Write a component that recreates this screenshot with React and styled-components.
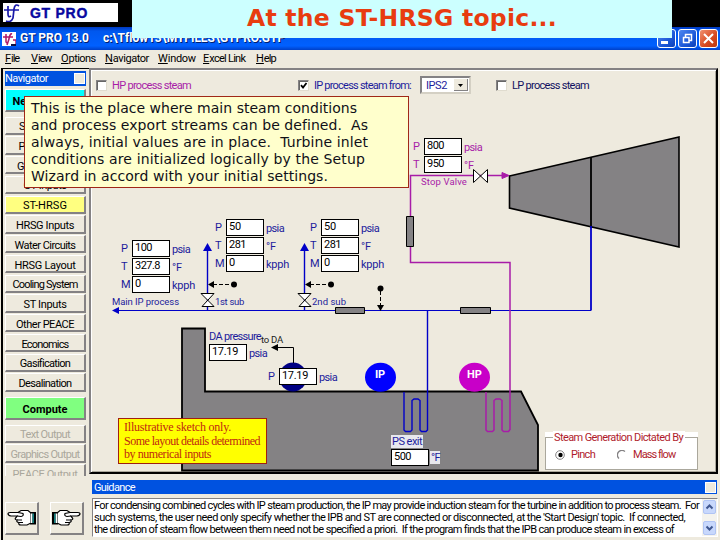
import React, { useLayoutEffect, useRef, useState } from "react";
import styled, { createGlobalStyle, css } from "styled-components";

const C = {
  face: "#eeeade",
  grey: "#848284",
  blue: "#0000c8",
  navy: "#1c1c9c",
  magenta: "#a81ca8",
  red: "#b01c2c",
  bar: "#0052e0",
};

const GlobalStyle = createGlobalStyle`
  * { box-sizing: border-box; }
  body { margin: 0; overflow: hidden; background: ${C.face}; font: 11px/13px Roboto, "Liberation Sans", Arial, sans-serif; color: #000; }
`;

/* A single line of text whose letters are spread over a fixed width. */
const FitLine = styled.span`
  display: inline-block;
  white-space: pre;
  flex: none;
`;
function Fit({ w, children }) {
  const ref = useRef(null);
  const [spacing, setSpacing] = useState(0);
  useLayoutEffect(() => {
    const natural = ref.current.getBoundingClientRect().width;
    setSpacing((w - natural) / String(children).length);
  }, [w, children]);
  return (
    <FitLine ref={ref} style={{ letterSpacing: `${spacing}px` }}>
      {children}
    </FitLine>
  );
}

const Screen = styled.div`
  position: relative;
  width: 720px;
  height: 540px;
  overflow: hidden;
  display: flex;
  flex-direction: column;
  background: ${C.face};
`;

const TopStrip = styled.div`
  height: 27px;
  flex: none;
  padding: 3px 0 0 3px;
  background: #000;
`;
const Brand = styled.div`
  display: flex;
  align-items: center;
  gap: 9px;
  width: 115px;
  height: 19px;
  background: #fff;
  color: #0808a0;
  font: bold 14px/18px "Liberation Sans", Arial, sans-serif;
  -webkit-text-stroke: 0.4px #0808a0;
`;
const Banner = styled.div`
  position: absolute;
  left: 132px;
  top: 0;
  width: 540px;
  height: 38px;
  padding: 5px 0 0 115px;
  background: #ccffff;
  color: #e83c10;
  font: bold 23.5px/27px "DejaVu Sans", Verdana, sans-serif;
`;
const TitleBar = styled.div`
  display: flex;
  align-items: center;
  flex: none;
  height: 23px;
  padding: 0 2px;
  background: linear-gradient(#0038c0, #0058ee 18%, #0060ff 82%, #0040c8);
  color: #fff;
  font-weight: bold;
  font-size: 12px;
  text-shadow: 1px 1px #002070;
`;
const TitleText = styled.div`
  display: flex;
  gap: 14px;
  flex: 1;
  margin-left: 4px;
`;
const WinButtons = styled.div`
  display: flex;
  gap: 2px;
`;
const WinButton = styled.div`
  width: 19px;
  height: 19px;
  border: 1px solid #fff;
  border-radius: 3px;
  background: ${(p) => (p.$close ? "linear-gradient(135deg,#f09070,#d84820 60%,#b83810)" : "linear-gradient(135deg,#5088f0,#1c58d8 60%,#0c40b8)")};
  svg { display: block; }
`;

const MenuBar = styled.div`
  display: flex;
  flex: none;
  height: 18px;
  padding: 2px 0 0 5px;
`;
const MenuItem = styled.div`
  width: ${(p) => p.$w}px;
  white-space: nowrap;
`;

const Body = styled.div`
  display: flex;
  flex: 1;
  min-height: 0;
`;
const Side = styled.div`
  width: 88px;
  flex: none;
  border-top: 1px solid #000;
  border-left: 2px solid #000;
  margin-left: 1px;
  padding: 2px 0 0 2px;
`;
const SideTitle = styled.div`
  display: flex;
  align-items: center;
  justify-content: space-between;
  width: 81px;
  height: 15px;
  padding: 0 1px 0 0;
  background: ${C.bar};
  color: #fff;
`;
const Grip = styled.div`
  width: 11px;
  height: 11px;
  background: ${C.face};
  border: 1px solid #fff;
`;
const NavList = styled.div`
  display: flex;
  flex-direction: column;
  gap: 1.5px;
  width: 81px;
  height: 390px;
  overflow: hidden;
`;
const NavButton = styled.div`
  display: flex;
  align-items: center;
  justify-content: center;
  flex: none;
  height: 18.28px;
  padding-top: 3px;
  margin-top: ${(p) => p.$gap || 0}px;
  border: 1px solid;
  border-color: #fff ${C.grey} ${C.grey} #fff;
  border-bottom-width: 2px;
  border-right-width: 2px;
  background: ${(p) => p.$fill || C.face};
  color: ${(p) => (p.$off ? "#aaa79c" : "#000")};
  ${(p) => p.$big && css`height: 23px; font-weight: bold;`}
`;
const Hands = styled.div`
  display: flex;
  gap: 11px;
  margin-top: 26px;
`;
const HandButton = styled.div`
  width: 34px;
  height: 33px;
  border: 1px solid;
  border-color: #fff ${C.grey} ${C.grey} #fff;
  border-right-width: 2px;
  border-bottom-width: 2px;
  svg { display: block; transform: ${(p) => (p.$flip ? "scaleX(-1)" : "none")}; }
`;

const Main = styled.div`
  flex: 1;
  min-width: 0;
  display: flex;
  flex-direction: column;
`;
const Panel = styled.div`
  position: relative;
  flex: none;
  width: 629px;
  height: 406px;
  border: 2px solid;
  border-color: ${C.grey} #000 #000 ${C.grey};
  box-shadow: inset 1px 1px #fff, inset -1px -1px #aaa79c;
`;
const SteamRow = styled.div`
  position: relative;
  display: grid;
  grid-template-columns: 202px 122px 76px auto;
  align-items: center;
  height: 18px;
  margin: 6px 0 0 5px;
`;
const Option = styled.label`
  display: flex;
  align-items: center;
  gap: 5px;
  color: ${(p) => p.$ink};
`;
const Box = styled.span`
  width: 11px;
  height: 11px;
  background: #fff;
  border: 1px solid;
  border-color: ${C.grey} #e0dccf #e0dccf ${C.grey};
  box-shadow: inset 1px 1px #666;
  svg { display: block; }
`;
const Select = styled.div`
  display: flex;
  justify-content: space-between;
  width: 51px;
  height: 18px;
  padding: 1px 1px 1px 4px;
  border: 2px solid;
  border-color: ${C.grey} #d4d0c4 #d4d0c4 ${C.grey};
  background: #fff;
  color: ${C.navy};
`;
const SelectArrow = styled.span`
  width: 14px;
  background: ${C.face};
  border-right: 1px solid ${C.grey};
  border-bottom: 1px solid ${C.grey};
  svg { display: block; }
`;
const Diagram = styled.svg`
  position: absolute;
  left: -2px;
  top: -2px;
`;
/* Diagram nodes are given in window coordinates; the panel starts at (91, 70). */
const Node = styled.div`
  position: absolute;
  left: ${(p) => p.$x - 91}px;
  top: ${(p) => p.$y - 70}px;
  color: ${(p) => p.$ink || C.navy};
  ${(p) => p.$small && css`font-size: 9.5px;`}
  ${(p) => p.$bold && css`font-weight: bold;`}
`;
const ParamRow = styled.div`
  display: grid;
  grid-template-columns: 11px 38px auto;
  height: 18px;
  align-items: center;
`;
const Field = styled.div`
  width: 38px;
  height: 17px;
  padding: 0 0 0 2px;
  border: 1px solid #000;
  background: #fff;
  color: #000;
  line-height: 14px;
`;
const Unit = styled.span`
  padding: 2px 0 0 2px;
`;
const Name = styled.span`
  padding-top: 1px;
`;
const Sketch = styled(Node)`
  width: 149px;
  height: 46px;
  padding: 2px 0 0 5px;
  border: 1px solid #a02010;
  background: #ffff00;
  color: #c02810;
  font: 12px/13.5px "Liberation Serif", "Times New Roman", serif;
  display: flex;
  flex-direction: column;
  align-items: flex-start;
`;
const ExitTag = styled.div`
  width: ${(p) => p.$w}px;
  height: 13px;
  padding-left: 1px;
  background: #e8e8ee;
`;
const ExitRow = styled.div`
  display: flex;
  align-items: center;
  gap: 1px;
  margin-top: 1px;
`;
const GroupBox = styled(Node)`
  width: 153px;
  height: 38px;
  padding-top: 5px;
  background: #fff;
`;
const GroupFrame = styled.div`
  height: 33px;
  border: 1px solid #aaa79c;
`;
const Legend = styled.div`
  width: 132px;
  height: 13px;
  margin: -7px 0 0 7px;
  padding-left: 1px;
  background: #fff;
`;
const Radios = styled.div`
  display: flex;
  gap: 22px;
  padding: 4px 0 0 9px;
`;
const Radio = styled.div`
  display: flex;
  align-items: center;
  gap: 6px;
`;

const GuideTitle = styled.div`
  display: flex;
  align-items: center;
  justify-content: space-between;
  flex: none;
  width: 625px;
  height: 14px;
  margin: 6px 0 0 3px;
  padding: 0 1px 0 2px;
  background: ${C.bar};
  color: #fff;
`;
const GuideBox = styled.div`
  display: flex;
  justify-content: space-between;
  width: 626px;
  height: 39px;
  margin: 4px 0 0 3px;
  border: 1px solid;
  border-color: ${C.grey} #fff #fff ${C.grey};
  background: #fff;
`;
const GuideText = styled.div`
  display: flex;
  flex-direction: column;
  align-items: flex-start;
  padding: 1px 0 0 1px;
  line-height: 12px;
`;
const ScrollBar = styled.div`
  display: flex;
  flex-direction: column;
  justify-content: space-between;
  width: 15px;
  padding: 1px;
  background: #f4f3ee;
`;
const ScrollButton = styled.div`
  width: 13px;
  height: 14px;
  border: 1px solid #b0c4f4;
  border-radius: 2px;
  background: #c8d8fc;
  svg { display: block; transform: ${(p) => (p.$down ? "scaleY(-1)" : "none")}; }
`;

const Note = styled.div`
  position: absolute;
  left: 24px;
  top: 96px;
  width: 385px;
  height: 92px;
  padding: 3px 0 0 6px;
  border: 1px solid #a02818;
  background: #ffffcc;
  display: flex;
  flex-direction: column;
  align-items: flex-start;
  color: #101018;
  font: 14px/17px "DejaVu Sans", Verdana, sans-serif;
`;

const topNav = [
  ["Start Design", 52], ["Plant Criteria", 53], ["GT Selection", 56], ["GT Inputs", 43],
  ["ST-HRSG", 44, "#ffff80"], ["HRSG Inputs", 58], ["Water Circuits", 61], ["HRSG Layout", 61],
  ["Cooling System", 65], ["ST Inputs", 43], ["Other PEACE", 58], ["Economics", 47],
  ["Gasification", 50], ["Desalination", 53],
];

const menus = [["File", 15, 26], ["View", 20, 30], ["Options", 34, 44], ["Navigator", 43, 53], ["Window", 35, 45], ["Excel Link", 43, 53], ["Help", 19, 30]];

const Check = ({ ink, text, w, on }) => (
  <Option $ink={ink}>
    <Box>{on && <svg width="9" height="9"><path d="M2 4.2 4 6.5 7.5 2" fill="none" stroke="#000" strokeWidth="1.8" /></svg>}</Box>
    <Fit w={w}>{text}</Fit>
  </Option>
);

const unitWidth = { psia: 18, "°F": 10, kpph: 23 };
const Params = ({ x, y, ink, rows }) => (
  <Node $x={x} $y={y} $ink={ink}>
    {rows.map(([name, value, unit, w]) => (
      <ParamRow key={name}>
        <Name>{name}</Name>
        <Field><Fit w={w}>{value}</Fit></Field>
        <Unit><Fit w={unitWidth[unit]}>{unit}</Fit></Unit>
      </ParamRow>
    ))}
  </Node>
);
const Label = ({ x, y, w, ink, small, bold, children }) => (
  <Node $x={x} $y={y} $ink={ink} $small={small} $bold={bold}><Fit w={w}>{children}</Fit></Node>
);

const Hand = () => (
  <svg width="31" height="30" viewBox="0 0 31 30">
    <path d="M2 10.5Q2 9.5 4 9.5H12L15 7.5H22L25 10V20L21 22H15Q12 22 13 19.5Q10 19 11 17Q8 16.5 10 14.5L11 13H5Q2 12.5 2 10.5Z" fill="#fff" stroke="#000" strokeWidth="1.2" />
    <path d="M12 9.5 17 10.5Q18 13 15 13.5L11 13M11 17H16M13 19.5H17" fill="none" stroke="#000" strokeWidth="1.2" />
    <path d="M24 9H30V21.5H24Z" fill="#000" />
    <path d="M24.5 10.5H26.5V20H24.5Z" fill="#fff" />
    <path d="M26.5 10.5H28V20H26.5Z" fill="#108080" />
  </svg>
);

const SubLine = ({ x }) => (
  <g transform={`translate(${x} 0)`}>
    <path d="M.5 310V249" stroke={C.blue} strokeWidth="1.4" />
    <path d="M.5 243 5 251H-4Z" fill={C.blue} />
    <path d="M-6 293.5H7L-5 306.5H7L-6 293.5Z" fill="#fff" stroke="#000" />
    <path d="M6 284.5H25" stroke="#000" strokeDasharray="4 2" />
    <path d="M1 284.5 7 281V288Z" />
    <circle cx="27" cy="284.5" r="3" />
  </g>
);

const Scene = () => (
  <Diagram width="629" height="406" viewBox="89 68 629 406">
    <path d="M182 328.5H205V391.5H521L538 425V470.5H182Z" fill={C.grey} stroke="#000" strokeWidth="1.8" />
    <path d="M509.5 176 679 137V247L509.5 208Z" fill={C.grey} stroke="#000" strokeWidth="1.6" />
    <path d="M591 157V228" stroke="#000" strokeWidth="1.8" />
    <path d="M591 226V310.5" stroke={C.blue} strokeWidth="1.8" />
    <path d="M117 310.5H591" stroke={C.blue} strokeWidth="1.2" />
    <path d="M112 310.5 119 307V314Z" fill={C.blue} />
    <SubLine x={207} />
    <SubLine x={304} />
    <g fill={C.grey} stroke="#000">
      <path d="M335.5 307.5H364.5V313.5H335.5Z M460.5 307.5H490.5V313.5H460.5Z" />
    </g>
    <path d="M380.5 291V305" stroke="#000" strokeDasharray="4 2" />
    <circle cx="380.5" cy="288.5" r="3" />
    <path d="M377 305H384L380.5 311Z" />
    <path d="M427.5 310V430L426 431.5H421.5L420 430V400.5L418 399H414L412 400.5V430L410.5 431.5H405.5L404 430V392" fill="none" stroke={C.blue} strokeWidth="1.4" />
    <path d="M502 175.5H410.5V262.5H510V429.5L508.5 431.5H503.5L502 430V400.5L500 399H496L494 400.5V430L492.5 431.5H487.5L486 430V392" fill="none" stroke={C.magenta} strokeWidth="1.5" />
    <path d="M502 172.5 509 175.5 502 178.5Z" fill={C.magenta} stroke={C.magenta} />
    <path d="M473.5 169.5V182.5L487.5 169.5V182.5Z" fill="#fff" stroke="#000" />
    <path d="M406.5 216.5H413.5V246.5H406.5Z" fill={C.grey} stroke="#000" />
    <ellipse cx="293" cy="377" rx="14" ry="14.5" fill="#000084" />
    <ellipse cx="380.5" cy="377.2" rx="15.5" ry="14.5" fill="#0000ff" />
    <ellipse cx="474.5" cy="377.2" rx="15.5" ry="14.5" fill="#c800c8" />
    <path d="M293.5 363V347.5H277" fill="none" stroke="#000" />
    <path d="M271 347.5 278 344V351Z" />
  </Diagram>
);

const Chevron = () => <svg width="11" height="12"><path d="M2.5 7.5 5.5 4.5 8.5 7.5" fill="none" stroke="#405890" strokeWidth="2" /></svg>;

export default function App() {
  return (
    <Screen>
      <GlobalStyle />
      <TopStrip>
        <Brand>
          <svg width="18" height="19" viewBox="0 0 18 19" fill="none" stroke="#1818a8" strokeWidth="1.7">
            <path d="M5 3V11Q5 15 8 13M1 7H16" />
            <path d="M16 3Q12 0 11 6L10 15Q8 20 3 18" />
          </svg>
          <Fit w={58}>GT PRO</Fit>
        </Brand>
      </TopStrip>
      <TitleBar>
        <svg width="14" height="14">
          <path d="M0 0H14V14H0Z" fill="#fff" />
          <path d="M4 2V10L6 12M1 5H11M10 2Q8 1 7 7L5 13M11 8H14V13H9" fill="none" stroke="#b01868" strokeWidth="1.5" />
          <path d="M9 12H14V14H9Z" fill="#101040" />
        </svg>
        <TitleText><Fit w={69}>GT PRO 13.0</Fit><Fit w={182}>c:\Tflow13\MYFILES\GTPRO.GTP</Fit></TitleText>
        <WinButtons>
          <WinButton><svg width="17" height="17"><path d="M3 11H10V14H3Z" fill="#fff" /></svg></WinButton>
          <WinButton><svg width="17" height="17"><path d="M6.5 7V4.5H12.5V10.5H10.5M4.5 7.5H10V12.5H4.5Z" fill="none" stroke="#fff" strokeWidth="1.5" /></svg></WinButton>
          <WinButton $close><svg width="17" height="17"><path d="M4 4 13 13M13 4 4 13" stroke="#fff" strokeWidth="2" /></svg></WinButton>
        </WinButtons>
      </TitleBar>
      <MenuBar>
        {menus.map(([name, w, cell]) => (
          <MenuItem key={name} $w={cell}><u>{name[0]}</u><Fit w={w - 7}>{name.slice(1)}</Fit></MenuItem>
        ))}
      </MenuBar>
      <Body>
        <Side>
          <SideTitle><Fit w={43}>Navigator</Fit><Grip /></SideTitle>
          <NavList>
            <NavButton $big $gap={3} $fill="#00ffff"><Fit w={65}>New Session</Fit></NavButton>
            {topNav.map(([name, w, fill], i) => (
              <NavButton key={name} $fill={fill} $gap={i ? 0 : 3}><Fit w={w}>{name}</Fit></NavButton>
            ))}
            <NavButton $big $gap={4} $fill="#80ff80"><Fit w={45}>Compute</Fit></NavButton>
            <NavButton $off $gap={3}><Fit w={50}>Text Output</Fit></NavButton>
            <NavButton $off><Fit w={69}>Graphics Output</Fit></NavButton>
            <NavButton $off><Fit w={65}>PEACE Output</Fit></NavButton>
          </NavList>
          <Hands>
            <HandButton><Hand /></HandButton>
            <HandButton $flip><Hand /></HandButton>
          </Hands>
        </Side>
        <Main>
          <Panel>
            <Scene />
            <SteamRow>
              <Check ink={C.magenta} text="HP process steam" w={79} />
              <Check ink={C.navy} text="IP process steam from:" w={97} on />
              <Select><Fit w={21}>IPS2</Fit><SelectArrow><svg width="13" height="12"><path d="M4 5H9L6.5 8Z" /></svg></SelectArrow></Select>
              <Check ink="#101060" text="LP process steam" w={77} />
            </SteamRow>
            <Params x={413} y={137} ink={C.magenta} rows={[["P", "800", "psia", 17], ["T", "950", "°F", 17]]} />
            <Label x={421} y={175} w={46} ink={C.magenta} small>Stop Valve</Label>
            <Params x={121} y={239} rows={[["P", "100", "psia", 17], ["T", "327.8", "°F", 25], ["M", "0", "kpph", 6]]} />
            <Params x={215} y={218} rows={[["P", "50", "psia", 12], ["T", "281", "°F", 17], ["M", "0", "kpph", 6]]} />
            <Params x={310} y={218} rows={[["P", "50", "psia", 12], ["T", "281", "°F", 17], ["M", "0", "kpph", 6]]} />
            <Label x={112} y={295} w={67} small>Main IP process</Label>
            <Label x={215} y={295} w={29} small>1st sub</Label>
            <Label x={312} y={295} w={34} small>2nd sub</Label>
            <Label x={209} y={330} w={52}>DA pressure</Label>
            <Label x={261} y={333} w={22} ink="#202020" small>to DA</Label>
            <Params x={198} y={343} rows={[["", "17.19", "psia", 26]]} />
            <Params x={268} y={367} rows={[["P", "17.19", "psia", 26]]} />
            <Label x={375} y={368} w={10} ink="#fff" bold>IP</Label>
            <Label x={467} y={368} w={15} ink="#fff" bold>HP</Label>
            <Sketch $x={118} $y={418}>
              <Fit w={107}>Illustrative sketch only.</Fit>
              <Fit w={136}>Some layout details determined</Fit>
              <Fit w={87}>by numerical inputs</Fit>
            </Sketch>
            <Node $x={391} $y={435}>
              <ExitTag $w={32}><Fit w={30}>PS exit</Fit></ExitTag>
              <ExitRow><Field><Fit w={17}>500</Fit></Field><ExitTag $w={10}><Fit w={9}>°F</Fit></ExitTag></ExitRow>
            </Node>
            <GroupBox $x={545} $y={432} $ink={C.red}>
              <GroupFrame>
                <Legend><Fit w={129}>Steam Generation Dictated By</Fit></Legend>
                <Radios>
                  <Radio>
                    <svg width="10" height="10"><circle cx="5" cy="5" r="4.3" fill="#fff" stroke={C.grey} /><circle cx="5.5" cy="5" r="2.2" /></svg>
                    <Fit w={24}>Pinch</Fit>
                  </Radio>
                  <Radio>
                    <svg width="10" height="10"><path d="M8 1.5A4.2 4.2 0 1 0 2 8.5" fill="#fff" stroke={C.grey} strokeWidth="1.3" /></svg>
                    <Fit w={42}>Mass flow</Fit>
                  </Radio>
                </Radios>
              </GroupFrame>
            </GroupBox>
          </Panel>
          <GuideTitle><Fit w={41}>Guidance</Fit><Grip /></GuideTitle>
          <GuideBox>
            <GuideText>
              <Fit w={605}>For condensing combined cycles with IP steam production, the IP may provide induction steam for the turbine in addition to process steam.  For</Fit>
              <Fit w={591}>such systems, the user need only specify whether the IPB and ST are connected or disconnected, at the 'Start Design' topic.  If connected,</Fit>
              <Fit w={579}>the direction of steam flow between them need not be specified a priori.  If the program finds that the IPB can produce steam in excess of</Fit>
            </GuideText>
            <ScrollBar>
              <ScrollButton><Chevron /></ScrollButton>
              <ScrollButton $down><Chevron /></ScrollButton>
            </ScrollBar>
          </GuideBox>
        </Main>
      </Body>
      <Banner><Fit w={310}>At the ST-HRSG topic...</Fit></Banner>
      <Note>
        <Fit w={326}>This is the place where main steam conditions</Fit>
        <Fit w={337}>and process export streams can be defined.  As</Fit>
        <Fit w={337}>always, initial values are in place.  Turbine inlet</Fit>
        <Fit w={334}>conditions are initialized logically by the Setup</Fit>
        <Fit w={297}>Wizard in accord with your initial settings.</Fit>
      </Note>
    </Screen>
  );
}
